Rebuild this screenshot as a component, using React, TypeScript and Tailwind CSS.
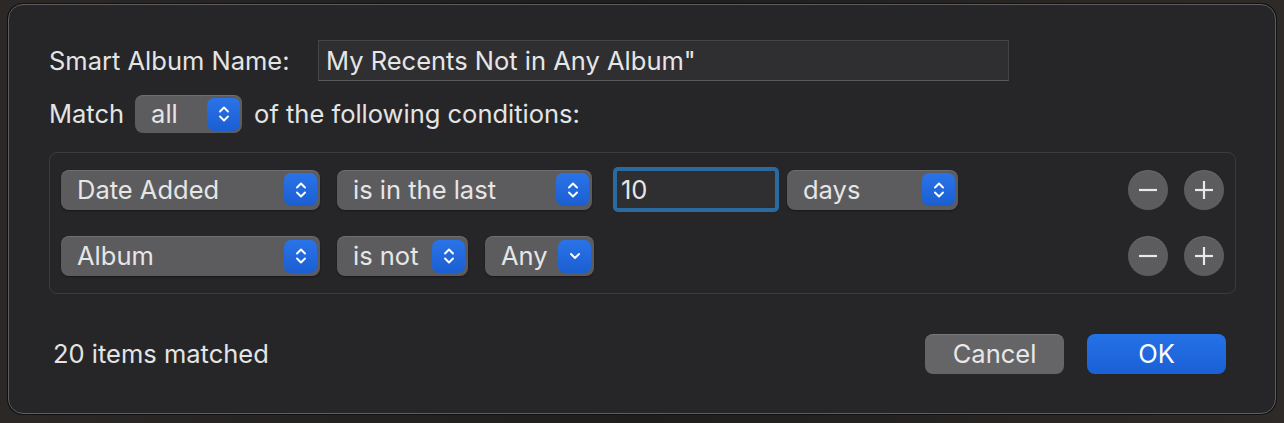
import React from 'react';

const font = { fontFamily: 'Inter, "Liberation Sans", sans-serif' };

// up/down chevrons inside the blue stepper
function UpDown() {
  return (
    <svg width="14" height="22" viewBox="0 0 14 22" fill="none">
      <path d="M3 8.5L7 4.5L11 8.5" stroke="white" strokeWidth="1.9" strokeLinecap="round" strokeLinejoin="round" />
      <path d="M3 13.5L7 17.5L11 13.5" stroke="white" strokeWidth="1.9" strokeLinecap="round" strokeLinejoin="round" />
    </svg>
  );
}

function Down() {
  return (
    <svg width="14" height="14" viewBox="0 0 14 14" fill="none">
      <path d="M3 5L7 9L11 5" stroke="white" strokeWidth="1.9" strokeLinecap="round" strokeLinejoin="round" />
    </svg>
  );
}

function Popup({ label, width, pull = false }: { label: string; width: string; pull?: boolean }) {
  return (
    <div
      className={`${width} h-[40px] shrink-0 flex items-center justify-between rounded-[8px] bg-[#5c5c5e] shadow-[inset_0_1px_0_rgba(255,255,255,0.12),0_1px_2px_rgba(0,0,0,0.4)] pl-[16px] pr-[3px]`}
    >
      <span className="text-[25.5px] text-[#e6e6e6] leading-none whitespace-nowrap">{label}</span>
      <div className="w-[33px] h-[33px] shrink-0 rounded-[7px] bg-gradient-to-b from-[#2a73e8] to-[#1a5fd2] flex items-center justify-center">
        {pull ? <Down /> : <UpDown />}
      </div>
    </div>
  );
}

function RoundBtn({ plus }: { plus?: boolean }) {
  return (
    <div className="w-[40px] h-[40px] rounded-full bg-[#5c5c5e] shadow-[inset_0_1px_0_rgba(255,255,255,0.1)] flex items-center justify-center">
      <svg width="22" height="22" viewBox="0 0 22 22">
        <path d="M2 11H20" stroke="#e8e8e8" strokeWidth="2.2" />
        {plus && <path d="M11 2V20" stroke="#e8e8e8" strokeWidth="2.2" />}
      </svg>
    </div>
  );
}

export default function App() {
  return (
    <div className="w-[1284px] h-[423px] bg-gradient-to-r from-[#2b2826] via-[#1f1e1d] to-[#2e2a27] pt-[4px] pl-[8px]" style={font}>
      <div className="w-[1268px] h-[410px] rounded-[15px] border-[1.5px] border-[#5e5e60] bg-[#262628] shadow-[0_0_0_1px_#111] pt-[35px] pl-[40px] pr-[39px] flex flex-col text-[#e4e4e4]">
        {/* name row */}
        <div className="flex items-center h-[41px]">
          <span className="text-[25.5px] w-[269px] leading-none whitespace-nowrap">Smart Album Name:</span>
          <div className="w-[691px] h-[41px] bg-[#2f2f31] border border-[#444446] border-b-[#5a5a5c] flex items-center pl-[7px]">
            <span className="text-[25.5px] leading-none text-[#e6e6e6] whitespace-nowrap">My Recents Not in Any Album"</span>
          </div>
        </div>

        {/* match row */}
        <div className="flex items-center mt-[14px] h-[38px]">
          <span className="text-[25.5px] leading-none">Match</span>
          <div className="ml-[11px] w-[107px] h-[38px] flex items-center justify-between rounded-[8px] bg-[#5c5c5e] shadow-[inset_0_1px_0_rgba(255,255,255,0.12)] pl-[16px] pr-[2px]">
            <span className="text-[25.5px] leading-none text-[#e6e6e6]">all</span>
            <div className="w-[33px] h-[33px] rounded-[7px] bg-gradient-to-b from-[#2a73e8] to-[#1a5fd2] flex items-center justify-center">
              <UpDown />
            </div>
          </div>
          <span className="ml-[12px] text-[25.5px] leading-none whitespace-nowrap">of the following conditions:</span>
        </div>

        {/* conditions */}
        <div className="mt-[19px] h-[142px] rounded-[8px] border border-[#3c3c3e] bg-[#262628] pl-[11px] pr-[11px] pt-[14px] flex flex-col gap-[24px]">
          <div className="flex items-center h-[45px]">
            <Popup label="Date Added" width="w-[259px]" />
            <div className="ml-[17px]">
              <Popup label="is in the last" width="w-[255px]" />
            </div>
            <div className="ml-[21px] w-[166px] h-[45px] rounded-[5px] border-[4px] border-[#2b6a9e] bg-[#2f2f31] flex items-center pl-[4px]">
              <span className="text-[25.5px] leading-none text-[#e6e6e6]">10</span>
            </div>
            <div className="ml-[8px]">
              <Popup label="days" width="w-[171px]" />
            </div>
            <div className="ml-auto flex gap-[16px]">
              <RoundBtn />
              <RoundBtn plus />
            </div>
          </div>
          <div className="flex items-center h-[40px]">
            <Popup label="Album" width="w-[259px]" />
            <div className="ml-[17px]">
              <Popup label="is not" width="w-[131px]" />
            </div>
            <div className="ml-[17px]">
              <Popup label="Any" width="w-[109px]" pull />
            </div>
            <div className="ml-auto flex gap-[16px]">
              <RoundBtn />
              <RoundBtn plus />
            </div>
          </div>
        </div>

        {/* footer */}
        <div className="mt-[40px] flex items-center pl-[4px]">
          <span className="text-[25.5px] leading-none whitespace-nowrap">20 items matched</span>
          <div className="ml-auto flex gap-[23px] pr-[10px]">
            <div className="w-[139px] h-[40px] rounded-[8px] bg-[#656567] shadow-[inset_0_1px_0_rgba(255,255,255,0.12)] flex items-center justify-center">
              <span className="text-[25.5px] leading-none text-[#e8e8e8]">Cancel</span>
            </div>
            <div className="w-[139px] h-[40px] rounded-[8px] bg-gradient-to-b from-[#2571e6] to-[#1a60d6] flex items-center justify-center">
              <span className="text-[25.5px] leading-none text-white">OK</span>
            </div>
          </div>
        </div>
      </div>
    </div>
  );
}
